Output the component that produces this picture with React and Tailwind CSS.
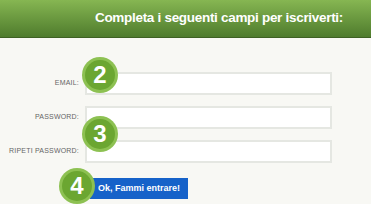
import React from 'react';

function Step({ n, className }) {
    return (
        <div className={`absolute w-[36px] h-[36px] rounded-full bg-[#8dc152] flex items-center justify-center ${className}`}>
            <div className="w-[30px] h-[30px] rounded-full bg-[#6ba631] flex items-center justify-center text-white text-[24px] font-bold leading-none [font-family:'Liberation_Sans',sans-serif]">
                {n}
            </div>
        </div>
    );
}

function Row({ label }) {
    return (
        <div className="flex items-center h-[23px]">
            <div className="w-[80px] pr-[1px] text-right text-[7px] tracking-[0.2px] whitespace-nowrap uppercase text-[#666] [font-family:'Liberation_Sans',sans-serif]">{label}</div>
            <div className="ml-[5px] w-[247px] h-[23px] bg-white border-2 border-[#e5e7e2]"></div>
        </div>
    );
}

export default function App() {
    return (
        <div className="relative w-[371px] h-[204px] overflow-hidden bg-[#f8f8f4]">
            {/* header */}
            <div className="h-[38px] bg-gradient-to-b from-[#86b652] to-[#4f7c2d] border-b border-[#3e6123] flex items-center justify-end pr-[28px]">
                <h1 className="text-white text-[13.5px] font-bold tracking-[-0.3px] whitespace-nowrap [font-family:'Liberation_Sans',sans-serif]">
                    Completa i seguenti campi per iscriverti:
                </h1>
            </div>

            <div className="pt-[34px] flex flex-col gap-[11px]">
                <Row label="Email:" />
                <Row label="Password:" />
                <Row label="Ripeti password:" />
            </div>
            <div className="pl-[90px] pt-[10px]">
                <button className="w-[98px] h-[21px] bg-[#1662c9] text-white text-[9px] font-bold text-left pl-[8px] [font-family:'Liberation_Sans',sans-serif]">
                    Ok, Fammi entrare!
                </button>
            </div>

            <Step n="2" className="left-[82px] top-[57px]" />
            <Step n="3" className="left-[82px] top-[116px]" />
            <Step n="4" className="left-[59px] top-[168px]" />
        </div>
    );
}
